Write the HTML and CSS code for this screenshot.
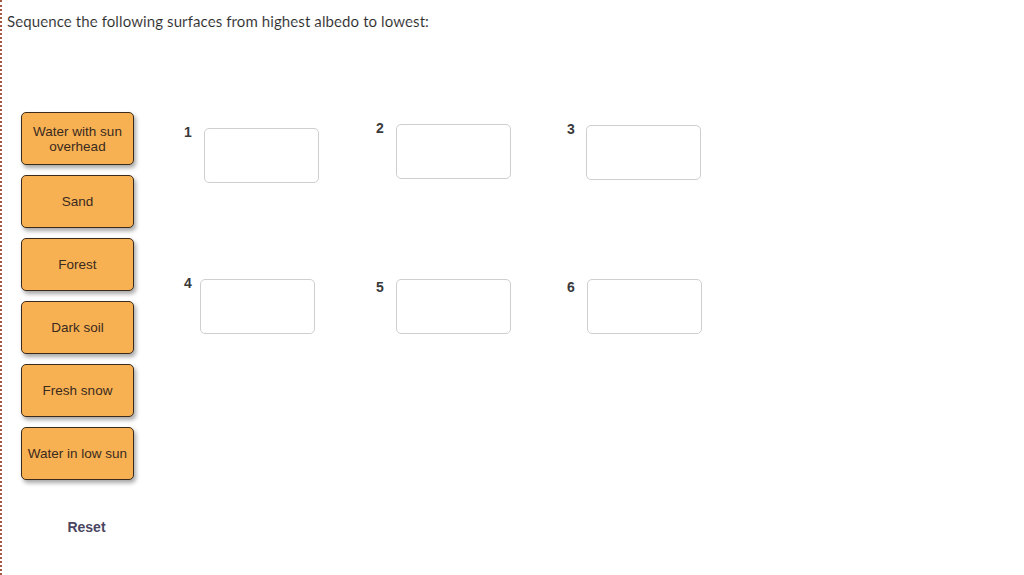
FILE: index.html
```html
<!DOCTYPE html>
<html lang="en">
  <head>
    <meta charset="UTF-8" />
    <title>Albedo Sequence</title>
    <link rel="stylesheet" href="styles.css">
  </head>
  <body>
    <div class="question">
      <p class="prompt">Sequence the following surfaces from highest albedo to lowest:</p>

      <div class="workspace">
        <div class="choices">
          <div class="card">Water with sun<br />overhead</div>
          <div class="card">Sand</div>
          <div class="card">Forest</div>
          <div class="card">Dark soil</div>
          <div class="card">Fresh snow</div>
          <div class="card">Water in low sun</div>
          <button class="reset" type="button">Reset</button>
        </div>

        <div class="slots">
          <div class="slot slot-1"><span class="num">1</span><div class="drop"></div></div>
          <div class="slot slot-2"><span class="num">2</span><div class="drop"></div></div>
          <div class="slot slot-3"><span class="num">3</span><div class="drop"></div></div>
          <div class="slot slot-4"><span class="num">4</span><div class="drop"></div></div>
          <div class="slot slot-5"><span class="num">5</span><div class="drop"></div></div>
          <div class="slot slot-6"><span class="num">6</span><div class="drop"></div></div>
        </div>
      </div>
    </div>
  </body>
</html>
```

FILE: styles.css
```css
body {
  margin: 0;
  background-color: #fff;
  font-family: "Liberation Sans", Arial, sans-serif;
}
.question {
  min-height: 575px;
  box-sizing: border-box;
  border-left: 2px dotted #a5573f;
  padding: 12px 0 0 5px;
}
.prompt {
  margin: 0;
  font-family: Lato, "Open Sans", sans-serif;
  font-size: 15px;
  color: #2a2a2a;
  letter-spacing: 0.1px;
  -webkit-text-stroke: 0.1px #fff;
}
.workspace {
  display: flex;
  margin-top: 82px;
}
.choices {
  display: flex;
  flex-direction: column;
  gap: 10px;
  margin-left: 14px;
  width: 113px;
}
.card {
  box-sizing: border-box;
  height: 53px;
  display: flex;
  align-items: center;
  justify-content: center;
  text-align: center;
  background-color: #f7b153;
  border: 1.5px solid #3b2b1c;
  border-radius: 5px;
  box-shadow: 2px 3px 4px rgba(0, 0, 0, 0.35);
  font-size: 13.5px;
  line-height: 15px;
  color: #3a2a1e;
}
.reset {
  margin: 29px 0 0 18px;
  padding: 0;
  border: none;
  background: none;
  font-family: "Liberation Sans", Arial, sans-serif;
  font-size: 14px;
  font-weight: bold;
  color: #4a4560;
}
.slots {
  display: grid;
  grid-template-columns: 192px 191px 191px;
  row-gap: 96px;
  margin-left: 50px;
  margin-top: 15px;
  align-content: start;
}
.slot {
  display: flex;
  align-items: flex-start;
}
.num {
  width: 20px;
  margin-top: -4px;
  font-size: 14px;
  font-weight: bold;
  color: #3a3a3a;
}
.drop {
  box-sizing: border-box;
  width: 115px;
  height: 55px;
  border: 1px solid #cfcfcf;
  border-radius: 5px;
  background-color: #fff;
}
.slot-1 {
  margin-top: 1px;
}
.slot-2 {
  margin-top: -3px;
}
.slot-3 {
  margin-top: -2px;
}
.slot-3 .num {
  width: 19px;
}
.slot-4 .num {
  width: 16px;
}
.slot-5 .num,
.slot-6 .num {
  margin-top: 0;
}
```
